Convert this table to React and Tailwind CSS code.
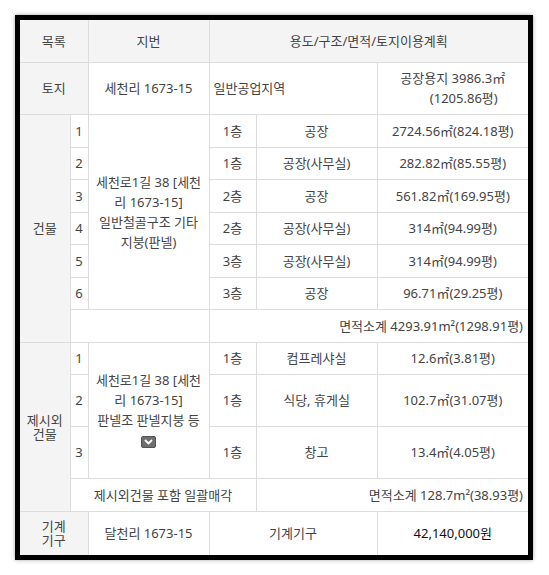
import React from 'react'

const cell = 'border border-[#dcdcdc] text-center align-middle p-0'
const head = cell + ' bg-[#f4f4f4]'

const buildings = [
  ['1', '1층', '공장', '2724.56㎡(824.18평)', 'h-[33px]'],
  ['2', '1층', '공장(사무실)', '282.82㎡(85.55평)', 'h-[32px]'],
  ['3', '2층', '공장', '561.82㎡(169.95평)', 'h-[33px]'],
  ['4', '2층', '공장(사무실)', '314㎡(94.99평)', 'h-[32px]'],
  ['5', '3층', '공장(사무실)', '314㎡(94.99평)', 'h-[33px]'],
  ['6', '3층', '공장', '96.71㎡(29.25평)', 'h-[32px]'],
]

const extras = [
  ['1', '1층', '컴프레샤실', '12.6㎡(3.81평)', 'h-[32px]'],
  ['2', '1층', '식당, 휴게실', '102.7㎡(31.07평)', 'h-[52px]'],
  ['3', '1층', '창고', '13.4㎡(4.05평)', 'h-[52px]'],
]

const Chevron = () => (
  <span className="inline-flex items-center justify-center w-[15px] h-[12px] rounded-[2px] bg-[#6f6f6f] border border-[#555] align-middle">
    <svg width="9" height="6" viewBox="0 0 9 6">
      <path d="M1 1 L4.5 4.5 L8 1" fill="none" stroke="#fff" strokeWidth="1.8" />
    </svg>
  </span>
)

export default function App() {
  return (
    <div className="w-[549px] h-[575px] bg-white pt-[15px] pl-[15px]" style={{ fontFamily: '"Noto Sans", "Noto Sans CJK KR", sans-serif' }}>
      <div className="w-[518px] border-[5px] border-black shadow-[0_0_4px_rgba(0,0,0,0.35)]">
        <table className="w-[508px] table-fixed border-collapse text-[13px] text-[#444] leading-[20px] bg-white">
          <colgroup>
            <col className="w-[50px]" />
            <col className="w-[18px]" />
            <col className="w-[121px]" />
            <col className="w-[47px]" />
            <col className="w-[121px]" />
            <col className="w-[151px]" />
          </colgroup>
          <tbody>
            <tr className="h-[42px]">
              <td colSpan={2} className={head + ' border-t-0 border-l-0'}>목록</td>
              <td className={head + ' border-t-0'}>지번</td>
              <td colSpan={3} className={head + ' border-t-0 border-r-0'}>용도/구조/면적/토지이용계획</td>
            </tr>
            <tr className="h-[52px]">
              <td colSpan={2} className={head + ' border-l-0'}>토지</td>
              <td className={cell}>세천리 1673-15</td>
              <td colSpan={2} className={cell + ' text-left pl-[4px]'}>일반공업지역</td>
              <td className={cell + ' border-r-0'}>
                공장용지 3986.3㎡<br />
                <span className="pl-[22px]">(1205.86평)</span>
              </td>
            </tr>
            {buildings.map(([n, fl, use, area, h], i) => (
              <tr key={n} className={h}>
                {i === 0 && <td rowSpan={7} className={head + ' border-l-0'}>건물</td>}
                <td className={cell}>{n}</td>
                {i === 0 && (
                  <td rowSpan={6} className={cell}>
                    세천로1길 38 [세천<br />리 1673-15]<br />일반철골구조 기타<br />지붕(판넬)
                  </td>
                )}
                <td className={cell}>{fl}</td>
                <td className={cell}>{use}</td>
                <td className={cell + ' border-r-0'}>{area}</td>
              </tr>
            ))}
            <tr className="h-[33px]">
              <td colSpan={2} className={cell}></td>
              <td colSpan={3} className={cell + ' border-r-0 text-right pr-[5px]'}>면적소계 4293.91m²(1298.91평)</td>
            </tr>
            {extras.map(([n, fl, use, area, h], i) => (
              <tr key={n} className={h}>
                {i === 0 && (
                  <td rowSpan={4} className={head + ' border-l-0 leading-[14px]'}>
                    제시외<br />건물
                  </td>
                )}
                <td className={cell}>{n}</td>
                {i === 0 && (
                  <td rowSpan={3} className={cell}>
                    세천로1길 38 [세천<br />리 1673-15]<br />판넬조 판넬지붕 등<br />
                    <Chevron />
                  </td>
                )}
                <td className={cell}>{fl}</td>
                <td className={cell}>{use}</td>
                <td className={cell + ' border-r-0'}>{area}</td>
              </tr>
            ))}
            <tr className="h-[33px]">
              <td colSpan={3} className={cell}>제시외건물 포함 일괄매각</td>
              <td colSpan={2} className={cell + ' border-r-0 text-right pr-[5px]'}>면적소계 128.7m²(38.93평)</td>
            </tr>
            <tr className="h-[44px]">
              <td colSpan={2} className={head + ' border-l-0 border-b-0 leading-[14px]'}>
                기계<br />기구
              </td>
              <td className={cell + ' border-b-0'}>달천리 1673-15</td>
              <td colSpan={2} className={cell + ' border-b-0'}>기계기구</td>
              <td className={cell + ' border-b-0 border-r-0 text-[#111]'}>42,140,000원</td>
            </tr>
          </tbody>
        </table>
      </div>
    </div>
  )
}
